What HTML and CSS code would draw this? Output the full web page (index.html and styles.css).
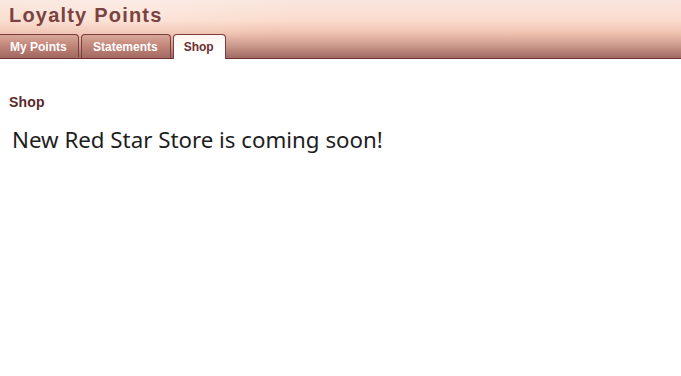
FILE: index.html
```html
<!DOCTYPE html>
<html lang="en">
<head>
	<meta charset="UTF-8">
	<title>Loyalty Points</title>
	<link rel="stylesheet" href="styles.css">
</head>
<body>
	<div id="header">
		<h1 class="title">Loyalty Points</h1>
		<ul class="tabs">
			<li class="tab"><a href="#">My Points</a></li>
			<li class="tab"><a href="#">Statements</a></li>
			<li class="tab active"><a href="#">Shop</a></li>
		</ul>
	</div>
	<div id="content">
		<h2 class="section">Shop</h2>
		<p class="notice">New Red Star Store is coming soon!</p>
	</div>
</body>
</html>
```

FILE: styles.css
```css
*{margin:0px;padding:0px; list-style:none;}
body{
	background: #fff;
	font-family: "Liberation Sans", Arial, sans-serif;
}
#header{
	height: 58px;
	border-bottom: 1px solid #6e3434;
	background:
		radial-gradient(ellipse 260px 60px at 120px 10px, rgba(255,255,255,0.25), rgba(255,255,255,0) 70%),
		linear-gradient(to bottom, #f9e6de 0%, #fbdccd 35%, #efc0ae 58%, #c9968a 80%, #a06a63 100%);
	display: flex;
	flex-direction: column;
	justify-content: space-between;
}
#header .title{
	padding: 4px 0 0 9px;
	font-size: 20px;
	font-weight: bold;
	letter-spacing: 1.2px;
	color: #7c4242;
}
#header .tabs{
	display: flex;
	gap: 2px;
}
#header .tab a{
	display: block;
	height: 23px;
	line-height: 25px;
	padding: 0 12px 0 11px;
	border: 1px solid #7a3d3d;
	border-bottom: none;
	border-radius: 4px 4px 0 0;
	background: linear-gradient(to bottom, #d9a898 0%, #c08478 50%, #a46a62 100%);
	color: #fff;
	font-size: 12px;
	font-weight: bold;
	text-decoration: none;
	white-space: nowrap;
}
#header .tab:first-child a{
	box-sizing: border-box;
	width: 79px;
	padding-left: 10px;
	border-left: none;
	border-top-left-radius: 0;
}
#header .tab.active a{
	height: 24px;
	margin-bottom: -1px;
	background: linear-gradient(to bottom, #fff4f0 0%, #fff 60%);
	color: #6a2e2e;
	padding: 0 11px 0 10px;
}
#content{
	padding: 35px 9px 0;
}
#content .section{
	font-size: 14px;
	font-weight: bold;
	letter-spacing: 0.2px;
	color: #5c2929;
}
#content .notice{
	margin-top: 14px;
	padding-left: 3px;
	font-family: "Noto Sans", "Open Sans", sans-serif;
	font-size: 22.3px;
	color: #1e1e1e;
}
```
